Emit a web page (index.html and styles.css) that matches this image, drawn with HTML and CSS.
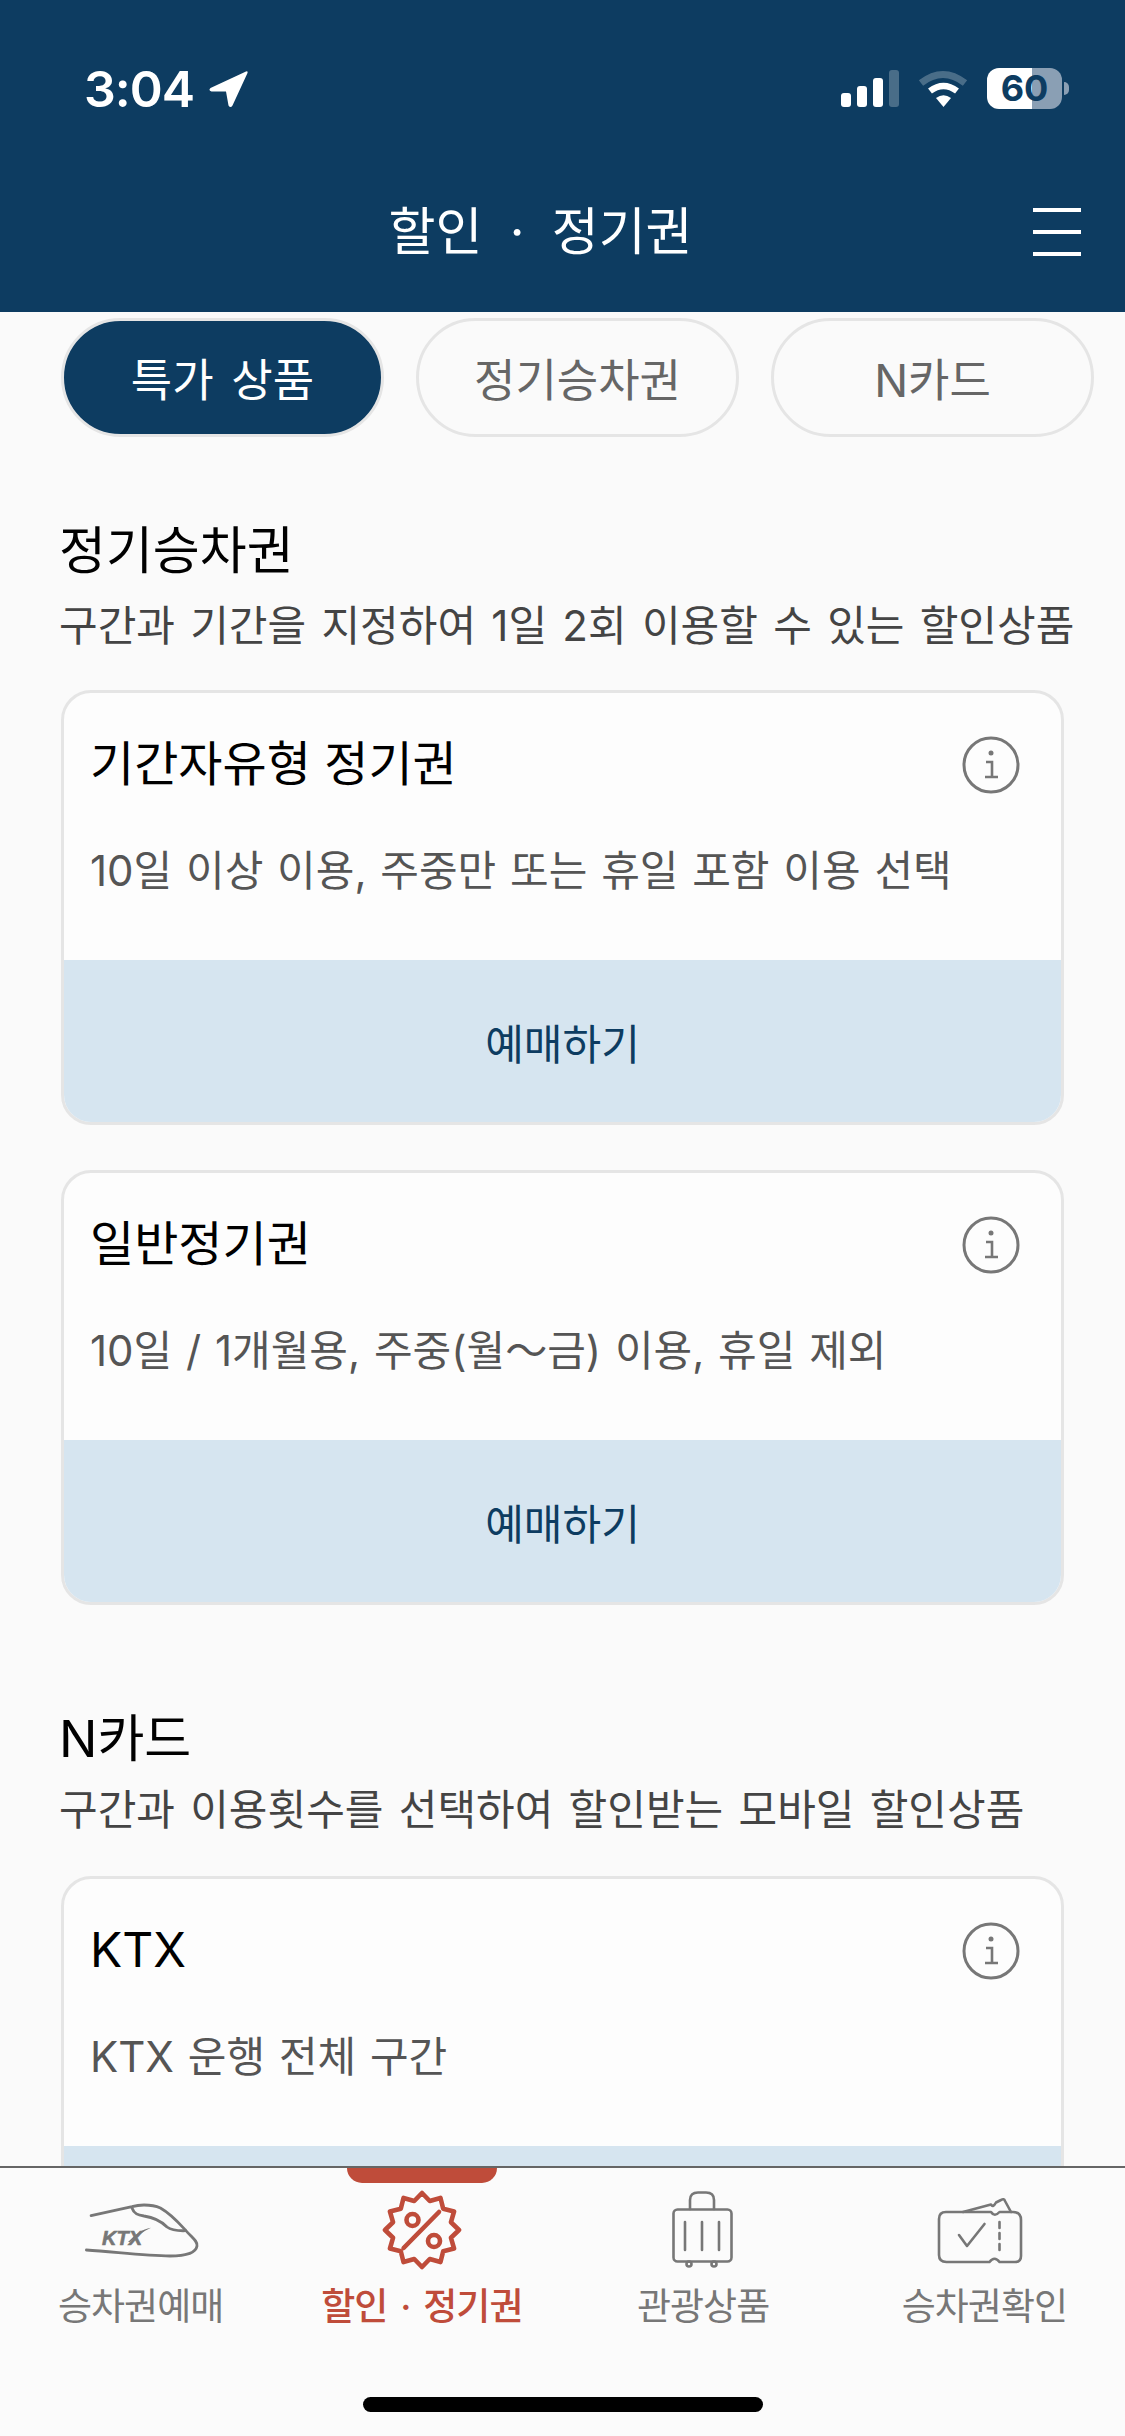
FILE: index.html
```html
<!DOCTYPE html>
<html lang="ko">
<head>
<meta charset="utf-8">
<title>할인 · 정기권</title>
<link rel="stylesheet" href="styles.css">
</head>
<body>
<div class="screen">
  <header class="header">
    <div class="status">
      <div class="status-left">
        <span class="time">3:04</span>
        <svg class="loc" viewBox="0 0 40 38" width="40" height="38"><path d="M38 1.5 L2.5 18 Q0 20.5 3.5 21.5 L18 21.5 L20.5 35.5 Q22.5 38.5 24.5 35.5 L39.5 3 Q40 0.5 38 1.5Z" fill="#fff"/></svg>
      </div>
      <div class="status-right">
        <svg class="signal" viewBox="0 0 58 37" width="58" height="37"><rect x="0" y="23" width="10" height="14" rx="3" fill="#fff"/><rect x="16" y="16" width="10" height="21" rx="3" fill="#fff"/><rect x="32" y="8" width="10" height="29" rx="3" fill="#fff"/><rect x="48" y="0" width="10" height="37" rx="3" fill="#fff" opacity=".25"/></svg>
        <svg class="wifi" viewBox="0 0 50 37" width="50" height="37"><path d="M3 13 Q25 -4 47 13" fill="none" stroke="#fff" stroke-width="7" opacity=".25"/><path d="M12 21 Q25.500 11 39 21" fill="none" stroke="#fff" stroke-width="6.500"/><path d="M25.500 37 L18 28 Q25.500 22.500 33 28Z" fill="#fff"/></svg>
        <div class="battery-wrap"><div class="battery">60</div><span class="battery-cap"></span></div>
      </div>
    </div>
    <div class="titlebar">
      <span></span>
      <h1 class="page-title">할인 · 정기권</h1>
      <button class="menu" aria-label="메뉴"><i></i><i></i><i></i></button>
    </div>
  </header>

  <main class="main">
    <nav class="tabs">
      <a class="tab tab-active">특가 상품</a>
      <a class="tab">정기승차권</a>
      <a class="tab">N카드</a>
    </nav>

    <section class="section section-first">
      <h2 class="section-title">정기승차권</h2>
      <p class="section-sub">구간과 기간을 지정하여 1일 2회 이용할 수 있는 할인상품</p>
      <article class="card">
        <div class="card-body">
          <div class="card-head"><h3 class="card-title">기간자유형 정기권</h3>
            <svg class="info" viewBox="0 0 58 58" width="58" height="58"><circle cx="29" cy="29" r="27" fill="none" stroke="#777" stroke-width="3"/><circle cx="29" cy="17" r="2.500" fill="#777"/><path d="M24 26 H30 V41 M23 41 H36" fill="none" stroke="#777" stroke-width="2.600"/></svg>
          </div>
          <p class="card-desc">10일 이상 이용, 주중만 또는 휴일 포함 이용 선택</p>
        </div>
        <a class="card-btn">예매하기</a>
      </article>
      <article class="card">
        <div class="card-body">
          <div class="card-head"><h3 class="card-title">일반정기권</h3>
            <svg class="info" viewBox="0 0 58 58" width="58" height="58"><circle cx="29" cy="29" r="27" fill="none" stroke="#777" stroke-width="3"/><circle cx="29" cy="17" r="2.500" fill="#777"/><path d="M24 26 H30 V41 M23 41 H36" fill="none" stroke="#777" stroke-width="2.600"/></svg>
          </div>
          <p class="card-desc">10일 / 1개월용, 주중(월～금) 이용, 휴일 제외</p>
        </div>
        <a class="card-btn">예매하기</a>
      </article>
    </section>

    <section class="section section-second">
      <h2 class="section-title">N카드</h2>
      <p class="section-sub sub-second">구간과 이용횟수를 선택하여 할인받는 모바일 할인상품</p>
      <article class="card card-cut">
        <div class="card-body">
          <div class="card-head"><h3 class="card-title">KTX</h3>
            <svg class="info" viewBox="0 0 58 58" width="58" height="58"><circle cx="29" cy="29" r="27" fill="none" stroke="#777" stroke-width="3"/><circle cx="29" cy="17" r="2.500" fill="#777"/><path d="M24 26 H30 V41 M23 41 H36" fill="none" stroke="#777" stroke-width="2.600"/></svg>
          </div>
          <p class="card-desc">KTX 운행 전체 구간</p>
        </div>
        <div class="card-btn"></div>
      </article>
    </section>
  </main>

  <footer class="bottom">
    <div class="bottom-items">
      <a class="item">
        <svg class="item-icon" viewBox="0 0 130 80" width="130" height="80" fill="none" stroke="#777" stroke-width="2.800" stroke-linecap="round">
          <path d="M15.100 25.700 L56 16.700 C60 15.500 64 15 68 15 C75 15 80 16 84.400 18 C95 24 102 32 109.400 40 C115 47 122 51 121 56 C120 62 112 66 94 66 C70 66 40 62 10.400 60"/>
          <path d="M56 18 C58 24 62 25 68 26 C75 27 84 30 91 37 C95 40 100 41 109.400 40.700"/>
          <path d="M52 52 C60 44 66 39 75 37.700 C68 41 60 46 54 52Z" fill="#777" stroke="none"/>
          <text x="26" y="55" class="ktx-mark">KTX</text>
        </svg>
        <span class="item-label">승차권예매</span>
      </a>
      <a class="item item-active">
        <span class="item-mark"></span>
        <svg class="item-icon" viewBox="0 0 130 80" width="130" height="80" fill="none" stroke="#bf4c3a" stroke-width="4.600" stroke-linejoin="round" stroke-linecap="round">
          <g transform="translate(25 0)">
            <polygon points="40,3 47.760,11.020 58.500,7.960 61.210,18.790 72.040,21.500 68.980,32.240 77,40 68.980,47.760 72.040,58.500 61.210,61.210 58.500,72.040 47.760,68.980 40,77 32.240,68.980 21.500,72.040 18.790,61.210 7.960,58.500 11.020,47.760 3,40 11.020,32.240 7.960,21.500 18.790,18.790 21.500,7.960 32.240,11.020"/>
            <path d="M57 22 L21.600 58"/>
            <circle cx="30.500" cy="30" r="6"/>
            <circle cx="52" cy="51" r="6"/>
          </g>
        </svg>
        <span class="item-label">할인 · 정기권</span>
      </a>
      <a class="item">
        <svg class="item-icon" viewBox="0 0 130 80" width="130" height="80" fill="none" stroke="#777" stroke-width="2.600" stroke-linecap="round">
          <rect x="35.500" y="19.500" width="58" height="52" rx="4"/>
          <path d="M52 19 V10 Q52 2.500 60 2.500 H68 Q76 2.500 76 10 V19"/>
          <path d="M47 32 V60 M64 32 V60 M81 32 V60"/>
          <circle cx="51" cy="74" r="2.500"/>
          <circle cx="76" cy="74" r="2.500"/>
        </svg>
        <span class="item-label">관광상품</span>
      </a>
      <a class="item">
        <svg class="item-icon" viewBox="0 0 130 80" width="130" height="80" fill="none" stroke="#777" stroke-width="2.600" stroke-linecap="round" stroke-linejoin="round">
          <path d="M27 22 H72 Q75.500 27.500 80.500 22 H94 Q102 22 102 30 V66 Q102 72 96 72 H80.500 Q75.500 65.500 70.500 72 H27.500 Q20 72 20 65 V29 Q20 22 27 22Z"/>
          <path d="M44 22 L72 14.500 Q74 18 77 12.500 L82 10 Q85 8 86 11 L92 22"/>
          <path d="M80.500 32 V38 M80.500 43 V49 M80.500 54 V60"/>
          <path d="M40 45 L48 56 L65.500 34"/>
        </svg>
        <span class="item-label">승차권확인</span>
      </a>
    </div>
    <div class="home-bar"></div>
  </footer>
</div>
</body>
</html>
```
FILE: styles.css
```css
* { box-sizing: border-box; }
html, body { margin: 0; padding: 0; }
body {
  width: 1125px;
  height: 2436px;
  overflow: hidden;
  background: #fafafa;
  font-family: Inter, "Noto Sans CJK KR", sans-serif;
}
h1, h2, h3, p { margin: 0; font-weight: 400; }
.screen { display: flex; flex-direction: column; height: 2436px; }

.header { flex: none; height: 312px; background: #0d3c61; color: #fff; display: flex; flex-direction: column; }
.status { height: 118px; padding: 70px 56px 0 84px; display: flex; justify-content: space-between; align-items: flex-start; }
.status-left { display: flex; align-items: center; gap: 14px; height: 38px; }
.time { font-size: 50px; font-weight: 600; line-height: 38px; letter-spacing: -1px; }
.loc { display: block; }
.status-right { display: flex; align-items: flex-end; height: 39px; gap: 19px; }
.signal, .wifi { display: block; margin-bottom: 2px; }
.battery-wrap { display: flex; align-items: center; gap: 2px; margin-top: -2px; }
.battery {
  width: 75px; height: 41px; border-radius: 12px;
  background: linear-gradient(90deg, #fff 60%, #8a9fb4 60%);
  color: #0d3c61; font-size: 36px; font-weight: 700; line-height: 41px; text-align: center;
}
.battery-cap { width: 5px; height: 13px; background: #8a9fb4; border-radius: 0 6px 6px 0; }

.titlebar { display: grid; grid-template-columns: 1fr auto 1fr; align-items: center; height: 66px; margin-top: 81px; padding-right: 44px; }
.page-title { font-size: 51px; line-height: 66px; word-spacing: 13px; }
.menu { justify-self: end; width: 48px; height: 48px; padding: 0; background: none; border: 0; display: flex; flex-direction: column; justify-content: space-between; }
.menu i { display: block; height: 4px; background: #fff; }

.main { flex: 1; min-height: 0; overflow: hidden; padding: 6px 61px 0; }
.tabs { display: grid; grid-template-columns: repeat(3, 323px); gap: 32px; width: 1033px; }
.tab {
  height: 119px; border: 3px solid #e5e5e5; border-radius: 60px;
  display: flex; align-items: center; justify-content: center;
  font-size: 45px; word-spacing: 5px; color: #666; background: #fafafa;
}
.tab-active { background: #0d3c61; color: #fff; }

.section-first { margin-top: 84px; }
.section-second { margin-top: 104px; }
.section-title { font-size: 51px; line-height: 60px; margin-left: -2px; color: #000; }
.section-sub { margin: 15px 0 0 -2px; font-size: 42px; line-height: 60px; word-spacing: 3.500px; color: #444; white-space: nowrap; }
.sub-second { margin-top: 11px; }
.card { margin-top: 34px; border: 3px solid #e5e5e5; border-radius: 30px; background: #fdfdfd; overflow: hidden; }
.card + .card { margin-top: 45px; }
.card-cut { margin-top: 36px; }
.card-body { padding: 41px 41px 0 26px; height: 267px; }
.card-head { display: flex; justify-content: space-between; align-items: center; height: 60px; }
.card-title { font-size: 48px; line-height: 60px; color: #000; }
.info { display: block; margin-top: 2px; }
.card-desc { margin-top: 47px; font-size: 42px; line-height: 60px; word-spacing: 2px; color: #555; white-space: nowrap; }
.card-btn { display: flex; align-items: center; justify-content: center; height: 162px; background: #d6e5f0; color: #0d3c61; font-size: 42px; }

.bottom { flex: none; height: 270px; border-top: 2px solid #666; background: #fbfbfb; display: flex; flex-direction: column; }
.bottom-items { display: grid; grid-template-columns: repeat(4, 1fr); padding-top: 22px; }
.item { position: relative; display: flex; flex-direction: column; align-items: center; color: #777; }
.item-icon { display: block; }
.item-label { margin-top: 12px; font-size: 37px; line-height: 50px; letter-spacing: -1px; word-spacing: 4px; white-space: nowrap; }
.item-active { color: #bf4c3a; }
.item-active .item-label { font-weight: 500; }
.item-mark { position: absolute; top: -22px; left: 66px; width: 150px; height: 15px; background: #bf4c3a; border-radius: 0 0 15px 15px; }
.ktx-mark { font-family: "Liberation Sans", sans-serif; font-style: italic; font-weight: 700; font-size: 20px; fill: #777; stroke: #777; stroke-width: 0.6px; }
.home-bar { width: 400px; height: 15px; margin: 65px auto 0; background: #000; border-radius: 8px; }
```
